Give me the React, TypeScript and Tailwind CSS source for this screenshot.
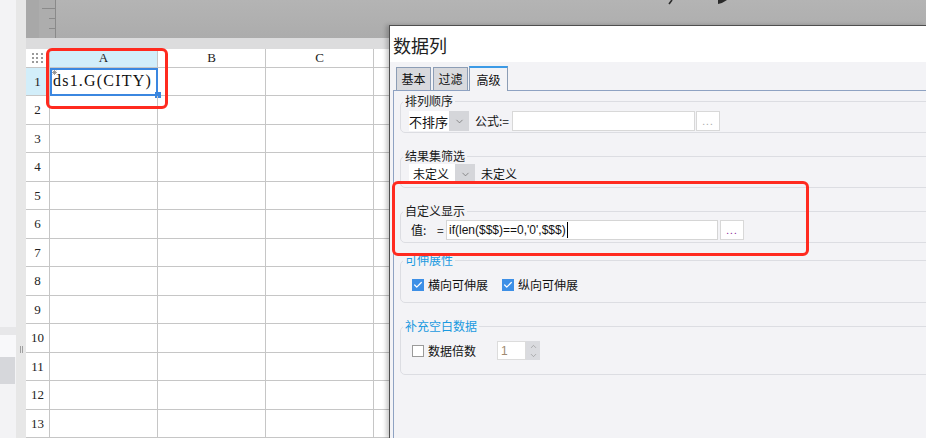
import { Check, ChevronDown, ChevronUp } from "lucide-react";

const ROWS = Array.from({ length: 13 }, (_, i) => i + 1);
const COLS = ["A", "B", "C"];

const cjk = "font-['Noto_Sans_CJK_SC',sans-serif]";
const sheetFont = "font-['Liberation_Serif',serif]";

function Select({ value, width }: { value: string; width: string }) {
  return (
    <div className="flex h-[20px]">
      <div className={`flex items-center bg-white text-[12px] leading-none text-[#111] ${width}`}>{value}</div>
      <div className="flex w-[20px] items-center justify-center bg-[#d5d6da]">
        <ChevronDown size={11} strokeWidth={1.5} className="text-[#666]" />
      </div>
    </div>
  );
}

function Dots({ tone }: { tone: string }) {
  return (
    <div className="flex h-[20px] w-[24px] items-end justify-center border border-[#d8d8d8] bg-white pb-[4px]">
      <span className={`text-[10px] leading-none tracking-[1px] ${tone}`}>...</span>
    </div>
  );
}

function Box({ checked }: { checked: boolean }) {
  return checked ? (
    <div className="flex h-[12px] w-[12px] items-center justify-center bg-[#3d8fe6]">
      <Check size={10} strokeWidth={3} className="text-white" />
    </div>
  ) : (
    <div className="h-[12px] w-[12px] border border-[#9a9a9a] bg-white" />
  );
}

function Group({
  title,
  blue,
  className,
  children,
}: {
  title: string;
  blue?: boolean;
  className: string;
  children: React.ReactNode;
}) {
  return (
    <fieldset className={`w-[600px] rounded-[5px] border border-[#dcdde2] ${className}`}>
      <legend
        className={`ml-[2px] px-[2px] text-[12px] leading-[16px] ${blue ? "text-[#1a9ae0]" : "text-[#1a1a1a]"}`}
      >
        {title}
      </legend>
      {children}
    </fieldset>
  );
}

function Sheet() {
  return (
    <div className="flex flex-1 flex-col bg-white">
      <div className="flex h-[38px] bg-gradient-to-b from-[#b4b4b4] to-[#acacac]">
        <div className="w-[13px] bg-[#a8a8a8]" />
        <div className="flex w-[17px] flex-col items-end gap-[9px] border-r border-[#8a8a8a] bg-[#adadad] pt-[8px]">
          <div className="h-px w-[13px] bg-[#8a8a8a]" />
          <div className="h-px w-[6px] bg-[#8a8a8a]" />
          <div className="h-px w-[6px] bg-[#8a8a8a]" />
        </div>
        <div className="flex-1" />
      </div>
      <div className="h-[11px] bg-[#dcdcdd]" />

      <div className={`flex h-[19px] border-b border-[#c6c6c6] text-[13px] text-[#222] ${sheetFont}`}>
        <div className="grid w-[24px] grid-cols-3 content-center justify-items-center gap-y-[2px] border-r border-[#c6c6c6] px-[5px]">
          {Array.from({ length: 9 }, (_, i) => (
            <div key={i} className="h-[2px] w-[2px] bg-[#9a9a9a]" />
          ))}
        </div>
        {COLS.map((c) => (
          <div
            key={c}
            className={`flex w-[108px] items-center justify-center border-r border-[#c6c6c6] ${c === "A" ? "bg-[#d2eefa]" : ""}`}
          >
            {c}
          </div>
        ))}
        <div className="flex-1" />
      </div>

      {ROWS.map((n) => (
        <div key={n} className={`flex h-[28.5px] shrink-0 border-b border-[#c6c6c6] text-[13px] text-[#222] ${sheetFont}`}>
          <div
            className={`flex w-[24px] items-center justify-center border-r border-[#c6c6c6] ${n === 1 ? "bg-[#d2eefa]" : ""}`}
          >
            {n}
          </div>
          <div className="relative w-[108px] border-r border-[#c6c6c6]">
            {n === 1 && (
              <>
                <div className="absolute -bottom-px left-0 right-[-1px] top-0 border-2 border-[#3b87e0]" />
                <div className="absolute bottom-[-3px] right-[-4px] h-[6px] w-[6px] bg-[#3b87e0]" />
                <svg className="absolute left-[2px] top-[2px]" width="5" height="5" viewBox="0 0 5 5">
                  <path d="M2.5 0 V5 M0 2.5 H5 M0.7 0.7 L4.3 4.3 M4.3 0.7 L0.7 4.3" stroke="#888" strokeWidth="0.8" />
                </svg>
                <div className="flex h-full items-center pl-[3px] text-[16px] tracking-[1.2px] text-[#111]">
                  ds1.G(CITY)
                </div>
              </>
            )}
          </div>
          <div className="w-[108px] border-r border-[#c6c6c6]" />
          <div className="w-[108px] border-r border-[#c6c6c6]" />
          <div className="flex-1" />
        </div>
      ))}
    </div>
  );
}

function Dialog() {
  return (
    <div
      className={`absolute bottom-0 left-[389px] right-0 top-[25px] flex flex-col overflow-hidden border-l border-t border-[#4e4e4e] bg-[#f3f3f6] shadow-[-3px_0_4px_rgba(0,0,0,0.2)] ${cjk}`}
    >
      <div className="flex h-[36px] shrink-0 items-center bg-white pl-[3px] pt-[3px] text-[18px] text-[#222]">
        数据列
      </div>

      <div className="flex h-[28px] shrink-0 items-end pl-[6px]">
        <div className="flex h-[23px] w-[35px] items-center justify-center border border-b-0 border-[#8c9db5] bg-[#d8d9dd] text-[12px] text-[#111]">
          基本
        </div>
        <div className="ml-[2px] flex h-[23px] w-[35px] items-center justify-center border border-b-0 border-[#8c9db5] bg-[#d8d9dd] text-[12px] text-[#111]">
          过滤
        </div>
        <div className="relative z-10 -mb-px ml-px flex h-[25px] w-[39px] items-center justify-center border-x border-t-2 border-x-[#8c9db5] border-t-[#3b9ae6] bg-[#f3f3f6] text-[12px] text-[#111]">
          高级
        </div>
      </div>

      <div className="ml-[3px] flex flex-1 flex-col border-l border-t border-[#8ea2c2] pl-[6px] pt-[2px]">
        <Group title="排列顺序" className="">
          <div className="flex items-center pb-[1px] pl-[8px] pt-[2px]">
            <div className="flex h-[20px]">
              <div className="flex w-[40px] items-center bg-white text-[13px] leading-none text-[#111]">不排序</div>
              <div className="flex w-[20px] items-center justify-center bg-[#d5d6da]">
                <ChevronDown size={11} strokeWidth={1.5} className="text-[#666]" />
              </div>
            </div>
            <span className="ml-[6px] w-[37px] text-[12px] text-[#111]">公式:=</span>
            <div className="h-[20px] w-[183px] border border-[#d8d8d8] bg-white" />
            <div className="ml-px">
              <Dots tone="text-[#aaa]" />
            </div>
          </div>
        </Group>

        <Group title="结果集筛选" className="mt-[15px]">
          <div className="flex items-center pb-[3px] pl-[8px]">
            <Select value="未定义" width="w-[46px] pl-[4px]" />
            <span className="ml-[6px] text-[12px] text-[#111]">未定义</span>
          </div>
        </Group>

        <Group title="自定义显示" className="mt-[15px]">
          <div className="flex items-center pb-[2px] pl-[10px] pt-px text-[12px] text-[#111]">
            <span className="w-[26px]">值:</span>
            <span className="w-[9px]">=</span>
            <div className="flex h-[20px] w-[272px] items-center border border-[#d5d5d5] bg-white pl-[2px] font-['Liberation_Sans',sans-serif] text-[12px]">
              if(len($$$)==0,'0',$$$)
              <span className="ml-px h-[16px] w-px bg-black" />
            </div>
            <div className="ml-[2px]">
              <Dots tone="text-[#8a2a96]" />
            </div>
          </div>
        </Group>

        <Group title="可伸展性" blue className="mt-[9px]">
          <div className="flex items-center pb-[11px] pl-[11px] pt-[11px] text-[12px] text-[#111]">
            <Box checked />
            <span className="ml-[4px] leading-[12px]">横向可伸展</span>
            <div className="ml-[14px]">
              <Box checked />
            </div>
            <span className="ml-[4px] leading-[12px]">纵向可伸展</span>
          </div>
        </Group>

        <Group title="补充空白数据" blue className="mt-[15px]">
          <div className="flex items-center pb-[14px] pl-[11px] pt-[7px] text-[12px] text-[#111]">
            <Box checked={false} />
            <span className="ml-[4px]">数据倍数</span>
            <div className="ml-[21px] flex h-[19px]">
              <div className="flex w-[29px] items-center border border-[#dcdcdc] bg-white pl-[3px] font-['Liberation_Sans',sans-serif] text-[12px] text-[#a08a70]">
                1
              </div>
              <div className="flex w-[14px] flex-col items-center justify-center bg-[#dadbdf] text-[#888]">
                <ChevronUp size={9} strokeWidth={1.5} />
                <ChevronDown size={9} strokeWidth={1.5} />
              </div>
            </div>
          </div>
        </Group>
      </div>
    </div>
  );
}

export default function App() {
  return (
    <div className="relative flex h-[438px] w-[926px] overflow-hidden bg-white">
      <div className="flex w-[16px] shrink-0 flex-col bg-[#f3f3f5]">
        <div className="h-[327px]" />
        <div className="h-[8px] bg-[#e7e7e9]" />
        <div className="h-[22px] bg-[#f8f8fa]" />
        <div className="h-[27px] w-[15px] bg-[#d6d7db]" />
      </div>
      <div className="flex w-[10px] shrink-0 flex-col items-center bg-[#e7e7e7] pt-[346px]">
        <div className="flex gap-[1px]">
          <div className="h-[7px] w-px bg-[#a0a0a0]" />
          <div className="h-[7px] w-px bg-[#a0a0a0]" />
        </div>
      </div>

      <Sheet />

      <svg className="absolute left-[660px] top-0" width="80" height="6" viewBox="0 0 80 6">
        <path d="M9 4 L12 0" stroke="#2a2a2a" strokeWidth="1.6" fill="none" />
        <path d="M58 4 L58 0 L67 0 Q63 3 58 4 Z" fill="#2a2a2a" />
      </svg>

      <Dialog />

      <div className="pointer-events-none absolute left-[46px] top-[48px] h-[61px] w-[122px] rounded-[6px] border-[3px] border-[#ff2a1f]" />
      <div className="pointer-events-none absolute left-[392px] top-[181px] h-[75px] w-[417px] rounded-[6px] border-[3px] border-[#ff2a1f]" />
    </div>
  );
}
